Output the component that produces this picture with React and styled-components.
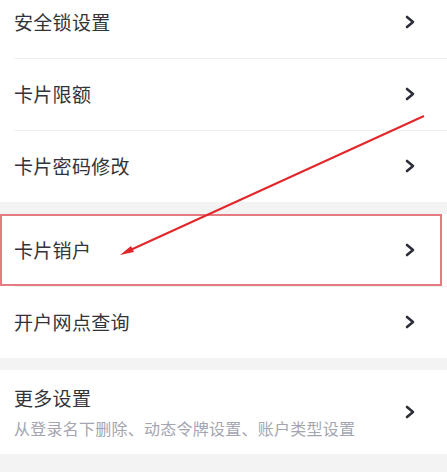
import React from 'react';
import styled, { createGlobalStyle } from 'styled-components';

const GlobalStyle = createGlobalStyle`
  html, body {
    margin: 0;
    padding: 0;
    background: #f3f3f3;
  }
  body {
    font-family: 'Noto Sans CJK SC', 'Noto Sans', sans-serif;
  }
`;

const Page = styled.div`
  position: relative;
  width: 447px;
  height: 472px;
  overflow: hidden;
  background: #f3f3f3;
`;

const Scroller = styled.div`
  margin-top: -14px;
`;

const Group = styled.section`
  background: #ffffff;
  margin-bottom: ${(p) => (p.$gap ? '12px' : '0')};
`;

const Row = styled.div`
  position: relative;
  display: flex;
  align-items: center;
  height: ${(p) => (p.$tall ? '84px' : '72px')};
  padding: 0 32px 0 14px;
  box-sizing: border-box;

  & + &::before {
    content: '';
    position: absolute;
    top: 0;
    left: 14px;
    right: 0;
    height: 1px;
    background: #f0f0f0;
  }
`;

const Labels = styled.div`
  flex: 1;
  display: flex;
  flex-direction: column;
  gap: 8px;
`;

const Title = styled.span`
  font-size: 19px;
  line-height: 24px;
  color: #33343a;
  letter-spacing: 0.3px;
`;

const Sub = styled.span`
  font-size: 16px;
  line-height: 20px;
  letter-spacing: 0.25px;
  color: #a3a5b0;
`;

const Highlight = styled.div`
  position: absolute;
  left: 0;
  top: 0;
  bottom: 0;
  right: 5px;
  border: 2px solid #e57b80;
  pointer-events: none;
`;

const Arrow = styled.svg`
  position: absolute;
  left: 0;
  top: 0;
  pointer-events: none;
`;

const Chevron = () => (
  <svg width="10" height="14" viewBox="0 0 10 14">
    <polyline
      points="2,2 8,7 2,12"
      fill="none"
      stroke="#2c2f38"
      strokeWidth="2.6"
      strokeLinecap="round"
      strokeLinejoin="round"
    />
  </svg>
);

const Item = ({ title, sub, tall, highlight }) => (
  <Row $tall={tall}>
    <Labels>
      <Title>{title}</Title>
      {sub && <Sub>{sub}</Sub>}
    </Labels>
    <Chevron />
    {highlight && <Highlight />}
  </Row>
);

export default function App() {
  return (
    <Page>
      <GlobalStyle />
      <Scroller>
        <Group $gap>
          <Item title="安全锁设置" />
          <Item title="卡片限额" />
          <Item title="卡片密码修改" />
        </Group>
        <Group $gap>
          <Item title="卡片销户" highlight />
          <Item title="开户网点查询" />
        </Group>
        <Group>
          <Item title="更多设置" sub="从登录名下删除、动态令牌设置、账户类型设置" tall />
        </Group>
      </Scroller>
      <Arrow width="447" height="472" viewBox="0 0 447 472">
        <line x1="424" y1="116" x2="126" y2="252" stroke="#e3262a" strokeWidth="2" />
        <polygon points="120,255 131,246 134,252" fill="#e3262a" />
      </Arrow>
    </Page>
  );
}
